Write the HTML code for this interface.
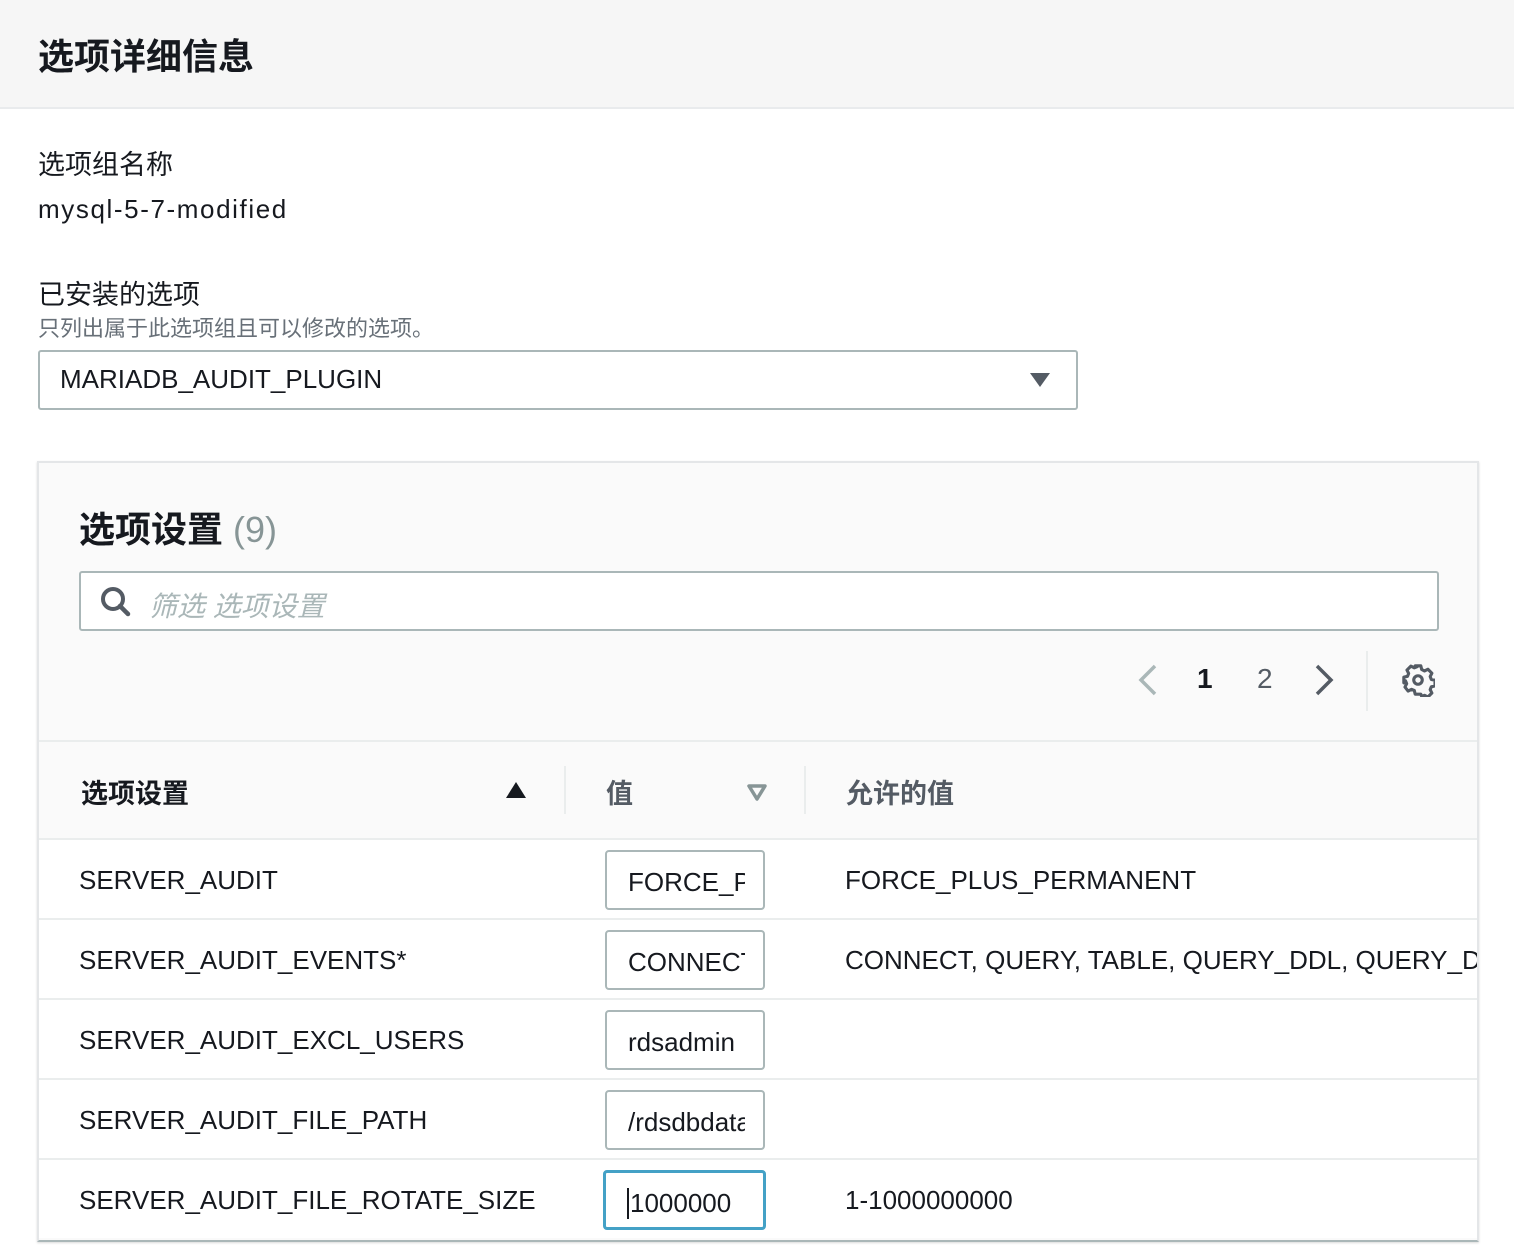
<!DOCTYPE html>
<html><head><meta charset="utf-8"><style>
*{box-sizing:border-box;margin:0;padding:0}
body{width:1514px;height:1256px;background:#fff;font-family:"Liberation Sans","Noto Sans CJK SC",sans-serif;color:#16191f;position:relative;overflow:hidden}
.abs{position:absolute;white-space:nowrap}
.hdr{position:absolute;left:0;top:0;width:1514px;height:109px;background:#f6f6f6;border-bottom:2px solid #e9ebed}
.panel{position:absolute;left:37px;top:461px;width:1442px;height:781px;background:#fafafa;border:2px solid #e4e6e8;border-bottom:2px solid #aab7b8;overflow:hidden;box-shadow:0 1px 2px rgba(0,0,0,.15)}
.row{position:absolute;left:0;width:1440px;height:80px;background:#fff;border-top:2px solid #eaeded}
.inp{position:absolute;left:566px;width:160px;height:60px;border:2px solid #aab7b8;border-radius:4px;background:#fff;font-size:26px;padding:15px 0 0 21px;white-space:nowrap}
.inp span{display:block;width:117px;overflow:hidden}
</style></head><body>
<div class="hdr"></div>
<div class="abs" style="left:38px;top:28px;font-size:36px;font-weight:bold">选项详细信息</div>
<div class="abs" style="left:38px;top:143px;font-size:27px">选项组名称</div>
<div class="abs" style="left:38px;top:194px;font-size:26px;letter-spacing:1.6px">mysql-5-7-modified</div>
<div class="abs" style="left:38px;top:273px;font-size:27px">已安装的选项</div>
<div class="abs" style="left:38px;top:311px;font-size:22px;color:#687078">只列出属于此选项组且可以修改的选项。</div>
<div class="abs" style="left:38px;top:350px;width:1040px;height:60px;border:2px solid #aab7b8;border-radius:3px;background:#fff"></div>
<div class="abs" style="left:60px;top:364px;font-size:26px">MARIADB_AUDIT_PLUGIN</div>
<svg class="abs" style="left:1029px;top:372px" width="22" height="16"><path d="M1 1h20L11 15z" fill="#545b64"/></svg>
<div class="panel">
 <div class="abs" style="left:40px;top:38px;font-size:36px;font-weight:bold">选项设置 <span style="color:#879596;font-weight:normal">(9)</span></div>
 <div class="abs" style="left:40px;top:108px;width:1360px;height:60px;border:2px solid #aab7b8;border-radius:3px;background:#fff"></div>
 <svg class="abs" style="left:60px;top:122px" width="34" height="34"><circle cx="14" cy="14" r="10" fill="none" stroke="#545b64" stroke-width="4"/><path d="M21 21l8 8" stroke="#545b64" stroke-width="4.5" stroke-linecap="round"/></svg>
 <div class="abs" style="left:110px;top:122px;font-size:28px;color:#aab7b8;font-style:italic">筛选 选项设置</div>
 <svg class="abs" style="left:1096px;top:200px" width="24" height="34"><path d="M20 3L6 17l14 14" fill="none" stroke="#aab7b8" stroke-width="3.5"/></svg>
 <div class="abs" style="left:1158px;top:200px;font-size:28px;font-weight:bold">1</div>
 <div class="abs" style="left:1218px;top:200px;font-size:28px;color:#545b64">2</div>
 <svg class="abs" style="left:1274px;top:200px" width="24" height="34"><path d="M4 3l14 14L4 31" fill="none" stroke="#545b64" stroke-width="3.5"/></svg>
 <div class="abs" style="left:1327px;top:188px;width:2px;height:60px;background:#eaeded"></div>
 <svg class="abs" style="left:1362px;top:200px" width="34" height="34" viewBox="0 0 24 24"><path d="M10 2h4l.6 2.6 2 1 2.4-1.2 2.8 2.8-1.2 2.4.8 2 2.6.6v4l-2.6.6-.8 2 1.2 2.4-2.8 2.8-2.4-1.2-2 .8L14 22h-4l-.6-2.6-2-.8-2.4 1.2-2.2-2.8 1.2-2.4-.8-2L2 14v-4l2.6-.6.8-2-1.2-2.4L7 2.2l2.4 1.2 2-.8z" fill="none" stroke="#545b64" stroke-width="2.2" stroke-linejoin="round"/><circle cx="12" cy="12" r="3" fill="none" stroke="#545b64" stroke-width="2.2"/></svg>
 <div class="abs" style="left:0;top:277px;width:1440px;height:2px;background:#eaeded"></div>
 <div class="abs" style="left:42px;top:309px;font-size:27px;font-weight:bold">选项设置</div>
 <svg class="abs" style="left:466px;top:318px" width="22" height="18"><path d="M1 17h20L11 1z" fill="#16191f"/></svg>
 <div class="abs" style="left:525px;top:303px;width:2px;height:48px;background:#eaeded"></div>
 <div class="abs" style="left:567px;top:309px;font-size:27px;font-weight:bold;color:#545b64">值</div>
 <svg class="abs" style="left:707px;top:320px" width="22" height="18"><path d="M3 3h16L11 16z" fill="none" stroke="#879596" stroke-width="3.5" stroke-linejoin="round"/></svg>
 <div class="abs" style="left:765px;top:303px;width:2px;height:48px;background:#eaeded"></div>
 <div class="abs" style="left:807px;top:309px;font-size:27px;font-weight:bold;color:#545b64">允许的值</div>

 <div class="row" style="top:375px"><div class="abs" style="left:40px;top:25px;font-size:26px">SERVER_AUDIT</div><div class="inp" style="top:10px"><span>FORCE_P</span></div><div class="abs" style="left:806px;top:25px;font-size:26px">FORCE_PLUS_PERMANENT</div></div>
 <div class="row" style="top:455px"><div class="abs" style="left:40px;top:25px;font-size:26px">SERVER_AUDIT_EVENTS*</div><div class="inp" style="top:10px"><span>CONNECT</span></div><div class="abs" style="left:806px;top:25px;font-size:26px">CONNECT, QUERY, TABLE, QUERY_DDL, QUERY_DML</div></div>
 <div class="row" style="top:535px"><div class="abs" style="left:40px;top:25px;font-size:26px">SERVER_AUDIT_EXCL_USERS</div><div class="inp" style="top:10px"><span>rdsadmin</span></div></div>
 <div class="row" style="top:615px"><div class="abs" style="left:40px;top:25px;font-size:26px">SERVER_AUDIT_FILE_PATH</div><div class="inp" style="top:10px"><span>/rdsdbdata</span></div></div>
 <div class="row" style="top:695px"><div class="abs" style="left:40px;top:25px;font-size:26px">SERVER_AUDIT_FILE_ROTATE_SIZE</div><div class="inp" style="top:10px;border:3px solid #44a1c6;left:564px;width:163px"><span style="border-left:2px solid #16191f;padding-left:1px">1000000</span></div><div class="abs" style="left:806px;top:25px;font-size:26px">1-1000000000</div></div>
</div>
</body></html>
